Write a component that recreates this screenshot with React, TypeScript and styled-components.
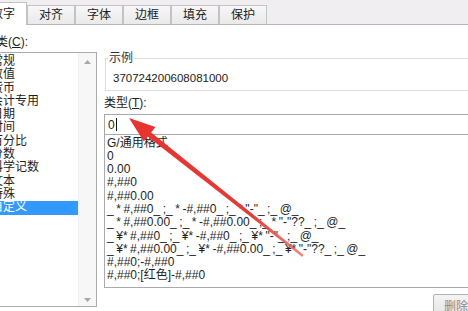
import React from "react";
import styled, { createGlobalStyle } from "styled-components";

const GlobalStyle = createGlobalStyle`
  html, body {
    margin: 0;
    padding: 0;
    background: #fff;
    overflow: hidden;
  }
  body {
    font-family: "Liberation Sans", "Noto Sans CJK SC", sans-serif;
  }
`;

const tabs = ["数字", "对齐", "字体", "边框", "填充", "保护"];

const categories = [
  "常规",
  "数值",
  "货币",
  "会计专用",
  "日期",
  "时间",
  "百分比",
  "分数",
  "科学记数",
  "文本",
  "特殊",
  "自定义",
];

const formats = [
  "G/通用格式",
  "0",
  "0.00",
  "#,##0",
  "#,##0.00",
  '_ * #,##0_ ;_ * -#,##0_ ;_ * "-"_ ;_ @_ ',
  '_ * #,##0.00_ ;_ * -#,##0.00_ ;_ * "-"??_ ;_ @_ ',
  '_ ¥* #,##0_ ;_ ¥* -#,##0_ ;_ ¥* "-"_ ;_ @_ ',
  '_ ¥* #,##0.00_ ;_ ¥* -#,##0.00_ ;_ ¥* "-"??_ ;_ @_ ',
  "#,##0;-#,##0",
  "#,##0;[红色]-#,##0",
];

function App() {
  return (
    <Window>
      <GlobalStyle />
      <TabBar>
        {tabs.map((t, i) => (
          <Tab key={t} $active={i === 0}>
            {t}
          </Tab>
        ))}
      </TabBar>
      <Body>
        <LeftCol>
          <FieldLabel>
            分类(<u>C</u>):
          </FieldLabel>
          <CategoryBox>
            <CategoryItems>
              {categories.map((c, i) => (
                <CategoryItem key={c} $selected={i === categories.length - 1}>
                  {c}
                </CategoryItem>
              ))}
            </CategoryItems>
            <ScrollBar>
              <ScrollArrow viewBox="0 0 7 4">
                <path d="M0 4 L3.5 0 L7 4 Z" />
              </ScrollArrow>
              <ScrollArrow viewBox="0 0 7 4">
                <path d="M0 0 L3.5 4 L7 0 Z" />
              </ScrollArrow>
            </ScrollBar>
          </CategoryBox>
        </LeftCol>
        <RightCol>
          <GroupBox>
            <Legend>示例</Legend>
            <SampleValue>370724200608081000</SampleValue>
          </GroupBox>
          <TypeLabel>
            类型(<u>T</u>):
          </TypeLabel>
          <TypeInput>
            0<Caret />
          </TypeInput>
          <FormatList>
            {formats.map((f) => (
              <FormatItem key={f}>{f}</FormatItem>
            ))}
          </FormatList>
          <ButtonRow>
            <DialogButton>删除(D)</DialogButton>
          </ButtonRow>
        </RightCol>
      </Body>
      <ArrowLayer width="468" height="311" viewBox="0 0 468 311">
        <defs>
          <linearGradient id="arrowFade" x1="129" y1="118" x2="303" y2="256" gradientUnits="userSpaceOnUse">
            <stop offset="0" stopColor="#e8332f" />
            <stop offset="0.7" stopColor="#e23c37" />
            <stop offset="1" stopColor="#e6605a" stopOpacity="0.75" />
          </linearGradient>
        </defs>
        <polygon
          points="129,118 155.5,127 151.2,132.4 303.7,255.1 302.3,256.9 147.6,136.4 143.8,141.5"
          fill="url(#arrowFade)"
        />
      </ArrowLayer>
    </Window>
  );
}

export default App;

const Window = styled.div`
  position: relative;
  width: 468px;
  height: 311px;
  overflow: hidden;
  background: #fff;
  color: #1e1e1e;
  font-size: 12px;
`;

const TabBar = styled.div`
  display: flex;
  align-items: flex-end;
  height: 25px;
  box-sizing: border-box;
  margin-left: -21px;
  background: #f0eef1;
  border-bottom: 1px solid #b6b6b8;
`;

const Tab = styled.div<{ $active?: boolean }>`
  position: relative;
  z-index: ${(p) => (p.$active ? 1 : 0)};
  width: 48px;
  box-sizing: border-box;
  height: ${(p) => (p.$active ? 23 : 19)}px;
  margin-bottom: ${(p) => (p.$active ? -1 : 0)}px;
  border: 1px solid #c3c3c6;
  border-bottom: none;
  background: ${(p) =>
    p.$active ? "#fff" : "linear-gradient(#f7f7f7, #e9e9ea)"};
  display: flex;
  align-items: center;
  justify-content: center;
  font-size: 12px;
  line-height: 14px;
  color: #222;
`;

const Body = styled.div`
  display: flex;
  align-items: flex-start;
`;

const LeftCol = styled.div`
  margin-left: -18px;
  width: 115px;
  padding-top: 10px;
  flex-shrink: 0;
`;

const FieldLabel = styled.div`
  padding-left: 2px;
  line-height: 14px;
  height: 14px;
  u {
    text-decoration: underline;
  }
`;

const CategoryBox = styled.div`
  margin-top: 3px;
  height: 255px;
  box-sizing: border-box;
  border: 1px solid #acacac;
  display: flex;
`;

const CategoryItems = styled.div`
  flex: 1;
  padding-top: 2px;
`;

const CategoryItem = styled.div<{ $selected?: boolean }>`
  height: 13.3px;
  line-height: 13.3px;
  padding-left: 8px;
  white-space: nowrap;
  background: ${(p) => (p.$selected ? "#3399ff" : "transparent")};
  color: ${(p) => (p.$selected ? "#fff" : "#1e1e1e")};
`;

const ScrollBar = styled.div`
  width: 17px;
  background: #f7f7f7;
  border-left: 1px solid #efefef;
  display: flex;
  flex-direction: column;
  justify-content: space-between;
  align-items: center;
  padding: 7px 0 4px;
`;

const ScrollArrow = styled.svg`
  width: 7px;
  height: 4px;
  fill: #a8a8a8;
`;

const RightCol = styled.div`
  margin-left: 7px;
  width: 409px;
  flex-shrink: 0;
  padding-top: 33px;
`;

const GroupBox = styled.div`
  margin-left: 1px;
  height: 33px;
  box-sizing: border-box;
  border: 1px solid #dcdcdc;
`;

const Legend = styled.span`
  display: block;
  width: fit-content;
  margin: -7px 0 0 2px;
  padding: 0 1px;
  background: #fff;
  line-height: 12px;
  color: #333;
`;

const SampleValue = styled.div`
  margin: 7px 0 0 7px;
  font-size: 11.5px;
  line-height: 14px;
  color: #222;
`;

const TypeLabel = styled.div`
  margin-top: 5px;
  line-height: 14px;
  height: 14px;
`;

const TypeInput = styled.div`
  margin-top: 4px;
  height: 21px;
  box-sizing: border-box;
  border: 1px solid #a9a9ab;
  padding-left: 3px;
  display: flex;
  align-items: center;
  font-size: 12px;
`;

const Caret = styled.span`
  display: inline-block;
  width: 1px;
  height: 13px;
  margin-left: 1px;
  background: #111;
`;

const FormatList = styled.div`
  margin-top: -1px;
  height: 154px;
  box-sizing: border-box;
  border: 1px solid #aaaaac;
  padding: 1.5px 0 0 2px;
  overflow: hidden;
`;

const FormatItem = styled.div`
  height: 13.3px;
  line-height: 13.3px;
  white-space: pre;
  word-spacing: -0.8px;
  color: #1e1e1e;
`;

const ButtonRow = styled.div`
  margin-top: 6px;
  display: flex;
  justify-content: flex-end;
`;

const DialogButton = styled.div`
  width: 80px;
  height: 23px;
  box-sizing: border-box;
  border: 1px solid #b2b2b2;
  border-radius: 2px;
  background: linear-gradient(#f4f4f4, #e4e4e4);
  display: flex;
  align-items: center;
  padding-left: 10px;
  color: #8a8a8a;
`;

const ArrowLayer = styled.svg`
  position: absolute;
  top: 0;
  left: 0;
  pointer-events: none;
`;
